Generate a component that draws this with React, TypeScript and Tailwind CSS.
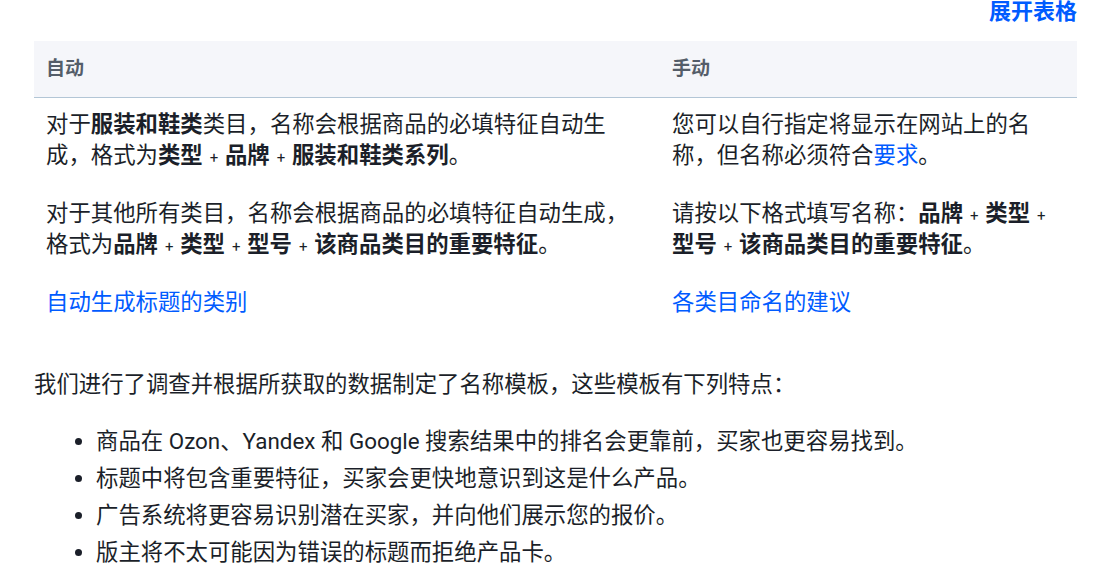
const font = { fontFamily: 'Roboto, "Noto Sans CJK SC", sans-serif' };

function Plus() {
  return <span className="ml-[7px] mr-[3px] text-[15px] leading-none font-normal">+ </span>;
}

export default function App() {
  return (
    <div className="min-h-[573px] w-[1104px] bg-white pl-[34px] pr-[27px] text-[22.4px] leading-[31px] text-[#1b1f29]" style={font}>
      <div className="flex h-[41px] items-start justify-end">
        <a className="text-[22px] font-bold leading-[24px] text-[#005bff]">展开表格</a>
      </div>

      <table className="w-full table-fixed border-collapse">
        <thead>
          <tr className="h-[56px] border-b border-[#b3c6d6] bg-[#f5f6fa]">
            <th className="w-[626px] pl-[12px] pr-[14px] text-left text-[19px] font-semibold text-[#545d69]">自动</th>
            <th className="pl-[12px] pr-[14px] text-left text-[19px] font-semibold text-[#545d69]">手动</th>
          </tr>
        </thead>
        <tbody>
          <tr className="align-top">
            <td className="pl-[12px] pr-[14px] pt-[11px]">
              <p>
                对于<b>服装和鞋类</b>类目，名称会根据商品的必填特征自动生成，格式为<b>类型</b>
                <Plus />
                <b>品牌</b>
                <Plus />
                <b>服装和鞋类系列</b>。
              </p>
              <p className="mt-[27px]">
                对于其他所有类目，名称会根据商品的必填特征自动生成，格式为<b>品牌</b>
                <Plus />
                <b>类型</b>
                <Plus />
                <b>型号</b>
                <Plus />
                <b>该商品类目的重要特征</b>。
              </p>
              <p className="mt-[27px]">
                <a className="text-[#005bff]">自动生成标题的类别</a>
              </p>
            </td>
            <td className="pl-[12px] pr-[14px] pt-[11px]">
              <p>
                您可以自行指定将显示在网站上的名称，但名称必须符合<a className="text-[#005bff]">要求</a>。
              </p>
              <p className="mt-[27px]">
                请按以下格式填写名称：<b>品牌</b>
                <Plus />
                <b>类型</b>
                <Plus />
                <b>型号</b>
                <Plus />
                <b>该商品类目的重要特征</b>。
              </p>
              <p className="mt-[27px]">
                <a className="text-[#005bff]">各类目命名的建议</a>
              </p>
            </td>
          </tr>
        </tbody>
      </table>

      <p className="mt-[51px]">我们进行了调查并根据所获取的数据制定了名称模板，这些模板有下列特点：</p>

      <ul className="mt-[26px] list-disc pl-[62px] leading-[31px] marker:text-[#1b1f29]">
        <li className="mb-[6px]">商品在 Ozon、Yandex 和 Google 搜索结果中的排名会更靠前，买家也更容易找到。</li>
        <li className="mb-[6px]">标题中将包含重要特征，买家会更快地意识到这是什么产品。</li>
        <li className="mb-[6px]">广告系统将更容易识别潜在买家，并向他们展示您的报价。</li>
        <li>版主将不太可能因为错误的标题而拒绝产品卡。</li>
      </ul>
    </div>
  );
}
